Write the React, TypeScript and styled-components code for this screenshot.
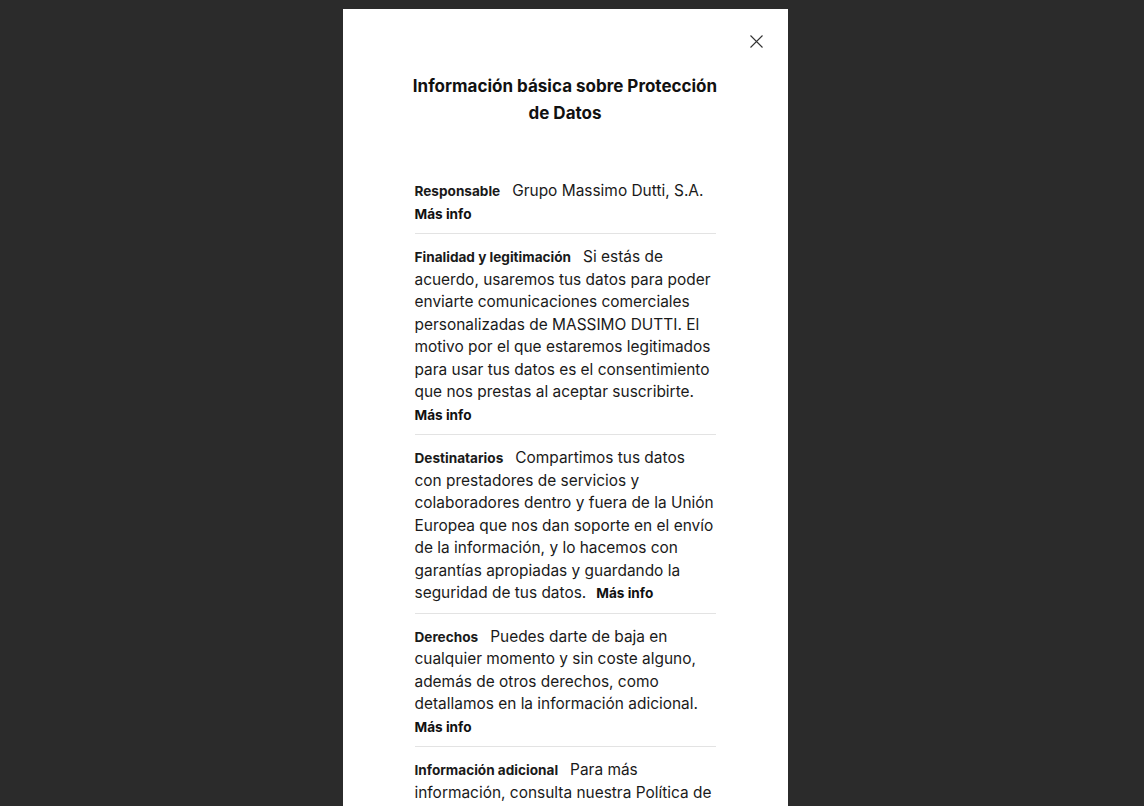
import React from "react";
import styled, { createGlobalStyle } from "styled-components";

const Global = createGlobalStyle`
  html, body { margin: 0; padding: 0; background: #2b2b2b; }
  body { font-family: "Inter", "Liberation Sans", sans-serif; color: #111; }
  * { box-sizing: border-box; }
`;

const Overlay = styled.div`
  height: 806px;
  overflow: hidden;
  display: flex;
  justify-content: center;
  padding: 9px 14px 0 0;
  background: #2b2b2b;
`;

const Modal = styled.div`
  width: 445px;
  background: #fff;
  position: relative;
  padding: 64px 72px 40px;
  min-height: 900px;
`;

const Close = styled.button`
  position: absolute;
  top: 20px;
  right: 19px;
  width: 24px;
  height: 24px;
  border: 0;
  background: none;
  padding: 0;
  display: flex;
  align-items: center;
  justify-content: center;
  cursor: pointer;
`;

const Title = styled.h2`
  margin: 0 -6px 41px;
  font-size: 17px;
  font-weight: 700;
  line-height: 27px;
  text-align: center;
`;

const Section = styled.div<{ $last?: boolean }>`
  padding: 12px 0 8px;
  border-bottom: ${(p) => (p.$last ? "none" : "1px solid #e3e3e3")};
  font-size: 15.45px;
  line-height: 22.5px;
  color: #1a1a1a;
`;

const Label = styled.span`
  font-size: 13.6px;
  font-weight: 700;
  margin-right: 12px;
`;

const More = styled.a<{ $inline?: boolean }>`
  display: ${(p) => (p.$inline ? "inline" : "block")};
  margin-left: ${(p) => (p.$inline ? "10px" : "0")};
  font-size: 13.6px;
  font-weight: 700;
  color: #111;
  text-decoration: none;
  cursor: pointer;
`;

const sections = [
  {
    label: "Responsable",
    text: "Grupo Massimo Dutti, S.A.",
    inline: false,
  },
  {
    label: "Finalidad y legitimación",
    text: "Si estás de acuerdo, usaremos tus datos para poder enviarte comunicaciones comerciales personalizadas de MASSIMO DUTTI. El motivo por el que estaremos legitimados para usar tus datos es el consentimiento que nos prestas al aceptar suscribirte.",
    inline: false,
  },
  {
    label: "Destinatarios",
    text: "Compartimos tus datos con prestadores de servicios y colaboradores dentro y fuera de la Unión Europea que nos dan soporte en el envío de la información, y lo hacemos con garantías apropiadas y guardando la seguridad de tus datos.",
    inline: true,
  },
  {
    label: "Derechos",
    text: "Puedes darte de baja en cualquier momento y sin coste alguno, además de otros derechos, como detallamos en la información adicional.",
    inline: false,
  },
  {
    label: "Información adicional",
    text: "Para más información, consulta nuestra Política de Privacidad.",
    inline: false,
    last: true,
  },
];

export default function App() {
  return (
    <>
      <Global />
      <Overlay>
        <Modal>
          <Close aria-label="Cerrar">
            <svg width="13" height="13" viewBox="0 0 13 13">
              <path d="M0.5 0.5 L12.5 12.5 M12.5 0.5 L0.5 12.5" stroke="#333" strokeWidth="1.1" />
            </svg>
          </Close>
          <Title>
            Información básica sobre Protección
            <br />
            de Datos
          </Title>
          {sections.map((s) => (
            <Section key={s.label} $last={s.last}>
              <Label>{s.label}</Label>
              {s.text}
              {!s.last && <More $inline={s.inline}>Más info</More>}
            </Section>
          ))}
        </Modal>
      </Overlay>
    </>
  );
}
